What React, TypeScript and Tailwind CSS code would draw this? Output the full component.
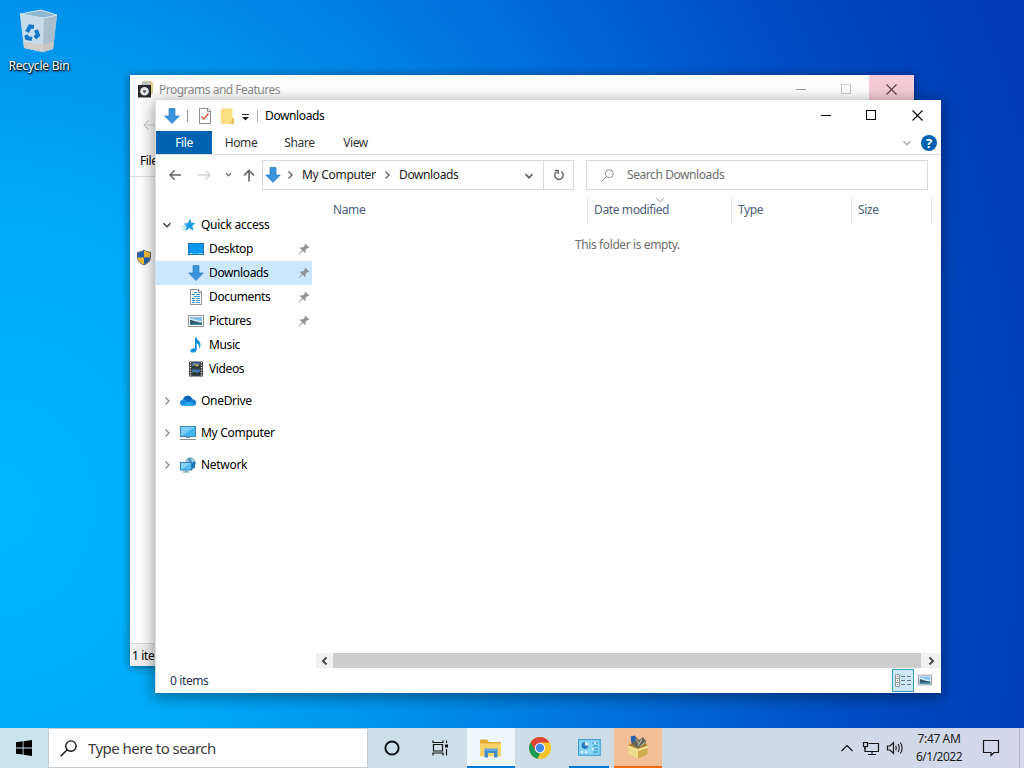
import type { ReactNode } from "react";

function DownArrow({ className = "" }: { className?: string }) {
  return (
    <svg width="16" height="16" viewBox="0 0 16 16" className={className}>
      <path d="M5 0.5H11V8H15.3L8 15.5L0.7 8H5Z" fill="#3a93dd" stroke="#2b78bb" strokeWidth="0.7" />
    </svg>
  );
}

function StarIcon() {
  return (
    <svg width="16" height="16" viewBox="0 0 16 16">
      <path d="M9.3 1.5L10.4 5.8L14.5 6L11.4 8.8L12.3 13.8L8.4 11L4.4 14L5.6 9.3L2.5 6.8L6.9 6Z" fill="#1b9de8" />
      <path d="M1.5 9.5H5.5M2 12H5M3 7.3H6" stroke="#6fc3f2" strokeWidth="0.9" />
    </svg>
  );
}

function DesktopIcon() {
  return (
    <svg width="16" height="16" viewBox="0 0 16 16">
      <rect x="0.5" y="2.5" width="15" height="11" fill="#0a97f0" stroke="#1478bd" />
      <path d="M1 12.5H15" stroke="#3db4fa" />
      <path d="M2 12.5H3.5M11.5 12.5H12.5M13.5 12.5H14.5" stroke="#e4f5ff" />
    </svg>
  );
}

function DocumentIcon() {
  return (
    <svg width="16" height="16" viewBox="0 0 16 16">
      <path d="M2.5 0.5H11L13.5 3V15.5H2.5Z" fill="#fafcfd" stroke="#8b949b" />
      <path d="M10.5 0.5V3.5H13.5" fill="none" stroke="#8b949b" />
      <path d="M6 3.5H9M4 5.5H7M8 5.5H12M6 7.5H12M4 9.5H7M8 9.5H12M4 11.5H7M8 11.5H12M4 13.5H7M8 13.5H12" stroke="#3997d6" />
    </svg>
  );
}

function PictureIcon({ size = 16 }: { size?: number }) {
  return (
    <svg width={size} height={size} viewBox="0 0 16 16">
      <rect x="0.5" y="2.5" width="15" height="11" fill="#fff" stroke="#8d959b" />
      <rect x="2" y="4" width="12" height="8" fill="#83c3ee" />
      <path d="M2 6C5 4.5 9 8.5 14 8V10H2Z" fill="#d4eaf3" />
      <path d="M2 7C5 7 8 9.5 14 9.5V12H2Z" fill="#31566a" />
      <path d="M2 10.5H14V12H2Z" fill="#3680a7" />
    </svg>
  );
}

function MusicIcon() {
  return (
    <svg width="16" height="16" viewBox="0 0 16 16">
      <path d="M7 0.5H8.7C9 3.5 13 4 12.5 8.5C12.3 10 11.8 10.7 11 11.5C11.6 8.5 10.7 7 8.7 6.3V12.5C8.7 14.5 7 15.6 4.8 15.6C3 15.6 2.3 14.6 2.5 13.5C2.8 11.8 5 10.8 7 11.4Z" fill="#128fdf" />
    </svg>
  );
}

function VideoIcon() {
  return (
    <svg width="16" height="16" viewBox="0 0 16 16">
      <rect x="1" y="0.5" width="14" height="15" fill="#35363b" />
      <path d="M2.5 1V16M13.5 1V16" stroke="#e8e8e8" strokeWidth="1.4" strokeDasharray="1.3 1.2" />
      <rect x="4" y="1.5" width="8" height="6" fill="#4968a6" />
      <rect x="4" y="8.5" width="8" height="6" fill="#3a6fb2" />
      <path d="M4 6L7 4L9 5L12 3V7.5H4ZM4 12.5L6 10.5L9 12L12 11V14.5H4Z" fill="#28372c" />
      <path d="M5 3L7 2.5L8 4L10 3L11 5L8 5.5ZM5 10L7 9.5L8 10.5Z" fill="#b5b45a" />
    </svg>
  );
}

function CloudIcon() {
  return (
    <svg width="16" height="16" viewBox="0 0 16 16">
      <path d="M3.5 13C1.4 13 0 11.7 0 9.8C0 8 1.4 6.8 3 6.5C4 3.5 6 2.7 7.8 2.7C10 2.7 11.5 4.2 12.1 6.2C14.5 6.2 16 7.8 16 9.7C16 11.8 14.6 13 12.6 13Z" fill="#1a8de0" />
      <path d="M3 6.5C4 3.5 6 2.7 7.8 2.7C10 2.7 11.5 4.2 12.1 6.2L8.5 8.6L5.5 6.7C4.7 6.2 3.8 6.2 3 6.5Z" fill="#0b62b3" />
      <path d="M1.2 12.2L12.1 6.2C14.5 6.2 16 7.8 16 9.7C16 10.5 15.7 11.3 15.2 11.9L9 8.7L1.2 12.2Z" fill="#167fd5" />
      <path d="M1.2 12.2L9 8.7L15.2 11.9C14.6 12.6 13.7 13 12.6 13H3.5C2.5 13 1.8 12.7 1.2 12.2Z" fill="#28a6ec" />
    </svg>
  );
}

function ComputerIcon() {
  return (
    <svg width="16" height="16" viewBox="0 0 16 16">
      <rect x="0.5" y="1.5" width="15" height="10" fill="#45b4f5" stroke="#4287b4" />
      <path d="M1 11V2H15Z" fill="#7ccefb" />
      <path d="M6 12H10V13H6Z" fill="#6b94ad" />
      <path d="M0 14.5H16" stroke="#86929a" />
    </svg>
  );
}

function NetworkIcon() {
  return (
    <svg width="16" height="16" viewBox="0 0 16 16">
      <circle cx="10.5" cy="5.5" r="5" fill="#5794b8" />
      <path d="M7 3C9 2 9 4.5 8 6L6 5ZM11 1C13 1 14.5 3 14.8 4.5L12 5Z" fill="#a9d2e5" />
      <path d="M11.5 6L15.5 4.5L15 10.5L12 12.5Z" fill="#1978b7" />
      <rect x="0.5" y="5.5" width="11" height="7.5" fill="#55bdf5" stroke="#2f83b9" />
      <path d="M1 12.5V6H11Z" fill="#88d4fb" />
      <path d="M3 15H9M6 13V15" stroke="#4d8bae" />
    </svg>
  );
}

function PinIcon() {
  return (
    <svg width="12" height="12" viewBox="0 0 12 12">
      <path d="M7.2 0.8L11.2 4.6L10.3 5.3L9.5 5.1L7.5 7.1L7.6 9.2L6.8 10L4.5 7.7L1.2 11.2L0.8 10.8L3.9 7.1L1.8 5L2.6 4.3L4.8 4.5L6.8 2.5L6.5 1.5Z" fill="#8d949b" />
    </svg>
  );
}

function Chevron({ d, color = "#555", width = 1.3 }: { d: "right" | "down" | "left" | "up"; color?: string; width?: number }) {
  const paths = {
    right: "M3.5 1.5L7 5L3.5 8.5",
    left: "M6.5 1.5L3 5L6.5 8.5",
    down: "M1.5 3.2L5 6.7L8.5 3.2",
    up: "M1.5 6.7L5 3.2L8.5 6.7",
  };
  return (
    <svg width="10" height="10" viewBox="0 0 10 10" className="shrink-0">
      <path d={paths[d]} fill="none" stroke={color} strokeWidth={width} />
    </svg>
  );
}

function SearchGlass({ size, color, width = 1 }: { size: number; color: string; width?: number }) {
  return (
    <svg width={size} height={size} viewBox="0 0 16 16" className="shrink-0">
      <circle cx="10.3" cy="5.7" r="4.9" fill="none" stroke={color} strokeWidth={width} />
      <path d="M6.8 9.2L0.6 15.4" stroke={color} strokeWidth={width} />
    </svg>
  );
}

function WindowButtons({ dim }: { dim?: boolean }) {
  return (
    <div className="flex h-full">
      <div className="flex w-[45px] items-center justify-center">
        <svg width="11" height="11"><path d="M0 5.5H10" stroke={dim ? "#999" : "#000"} /></svg>
      </div>
      <div className="flex w-[45px] items-center justify-center">
        <svg width="11" height="11">
          <rect x="0.5" y="0.5" width="9" height="9" fill="none" stroke={dim ? "#ccc" : "#000"} />
        </svg>
      </div>
      <div className={dim ? "flex w-[45px] items-center justify-center bg-[#f6cbd5]" : "flex w-[46px] items-center justify-center"}>
        <svg width="11" height="11"><path d="M0.5 0.5L10.5 10.5M10.5 0.5L0.5 10.5" stroke={dim ? "#5a3c42" : "#000"} strokeWidth="1.1" /></svg>
      </div>
    </div>
  );
}

const quickAccess = [
  { label: "Desktop", icon: <DesktopIcon />, pinned: true },
  { label: "Downloads", icon: <DownArrow />, pinned: true, selected: true },
  { label: "Documents", icon: <DocumentIcon />, pinned: true },
  { label: "Pictures", icon: <PictureIcon />, pinned: true },
  { label: "Music", icon: <MusicIcon /> },
  { label: "Videos", icon: <VideoIcon /> },
];

const roots = [
  { label: "OneDrive", icon: <CloudIcon /> },
  { label: "My Computer", icon: <ComputerIcon /> },
  { label: "Network", icon: <NetworkIcon /> },
];

const columns = [
  { label: "Name", className: "w-[276px] pl-[21px]" },
  { label: "Date modified", className: "w-[144px] pl-[6px]", sorted: true },
  { label: "Type", className: "w-[120px] pl-[6px]" },
  { label: "Size", className: "w-[80px] pl-[6px]" },
];

function NavPane() {
  return (
    <div className="w-[156px] shrink-0 pt-[18px] text-black">
      <div className="flex h-6 items-center pl-[6px] tracking-[-0.27px]">
        <Chevron d="down" color="#444" width={1.6} />
        <span className="ml-[9px] mr-1"><StarIcon /></span>
        Quick access
      </div>
      {quickAccess.map((item) => (
        <div
          key={item.label}
          className={`flex h-6 items-center pl-8 pr-[2px] ${item.selected ? "bg-[#cce8ff]" : ""}`}
        >
          {item.icon}
          <span className="ml-[5px] flex-1">{item.label}</span>
          {item.pinned && <PinIcon />}
        </div>
      ))}
      {roots.map((item) => (
        <div key={item.label} className="mt-2 flex h-6 items-center pl-[6px] tracking-[-0.3px]">
          <Chevron d="right" color="#999" width={1.6} />
          <span className="ml-2 mr-[5px]">{item.icon}</span>
          {item.label}
        </div>
      ))}
    </div>
  );
}

function AddressBar() {
  return (
    <div className="flex h-10 items-center text-[#1a1a1a]">
      <svg width="100" height="16" viewBox="0 0 100 16" fill="none" className="ml-[6px] shrink-0">
        <path d="M8 8H19M12.7 3.2L8 8L12.7 12.8" stroke="#666" strokeWidth="1.4" />
        <path d="M36 8H48M43.3 3.2L48 8L43.3 12.8" stroke="#d5d5d5" strokeWidth="1.4" />
        <path d="M64 6.2L66.5 8.8L69 6.2" stroke="#777" strokeWidth="1.4" />
        <path d="M87 14.5V3.5M82 8.5L87 3.5L92 8.5" stroke="#666" strokeWidth="1.6" />
      </svg>
      <div className="flex h-[30px] w-[312px] shrink-0 items-center border border-[#d9d9d9]">
        <DownArrow className="ml-[2px]" />
        <span className="ml-1 mr-[7px] flex"><Chevron d="right" color="#666" width={1.4} /></span>
        <span className="w-[75px] tracking-[-0.3px]">My Computer</span>
        <span className="ml-[5px] mr-[7px] flex"><Chevron d="right" color="#666" width={1.4} /></span>
        <span className="flex-1">Downloads</span>
        <span className="mr-[9px] mt-[2px]"><Chevron d="down" color="#666" width={1.8} /></span>
        <div className="flex h-full w-[30px] items-center justify-center border-l border-[#d9d9d9]">
          <svg width="12" height="12" viewBox="0 0 12 12" fill="none" stroke="#666" strokeWidth="1.5">
            <path d="M8.2 2.6A4.2 4.2 0 1 1 3.6 2.8" />
            <path d="M2 1.6H5.2V5" />
          </svg>
        </div>
      </div>
      <div className="ml-3 flex h-[30px] w-[342px] shrink-0 items-center border border-[#d9d9d9] pl-[14px] text-[#6d6d6d]">
        <SearchGlass size={13} color="#777" />
        <span className="ml-[13px] tracking-[-0.42px]">Search Downloads</span>
      </div>
    </div>
  );
}

function ExplorerWindow() {
  return (
    <div className="absolute left-[155px] top-[100px] flex h-[593px] w-[786px] flex-col border-l border-[#dde1e4] bg-white shadow-[0_3px_14px_2px_rgba(0,0,0,0.38)]">
      <div className="flex h-[31px] shrink-0 items-center">
        <DownArrow className="ml-2" />
        <span className="ml-[7px] h-3 w-px bg-[#999]" />
        <svg width="59" height="18" viewBox="0 0 59 18" className="ml-[10px]">
          <path d="M1.5 1.5H10L12.5 4V16.5H1.5Z" fill="#fff" stroke="#8e8e8e" />
          <path d="M9.5 1.5V4.5H12.5" fill="none" stroke="#8e8e8e" />
          <path d="M3.3 9.5L5.8 12L10.5 6.5" fill="none" stroke="#d6593c" strokeWidth="1.5" />
          <path d="M23 1.5H34.5V11H36V17H23Z" fill="#f9de82" />
          <path d="M34.5 11H36V17H33Z" fill="#e8bd4c" />
          <path d="M44 7.5H51" stroke="#222" />
          <path d="M44 10H51L47.5 13.5Z" fill="#222" />
        </svg>
        <span className="ml-0 h-3 w-px bg-[#aaa]" />
        <span className="ml-[7px] flex-1 text-black">Downloads</span>
        <WindowButtons />
        <span className="w-[1px]" />
      </div>
      <div className="flex h-6 shrink-0 items-center border-b border-[#dcdcdc] text-[#333]">
        <span className="flex h-full w-14 items-center justify-center bg-[#0063b1] text-white">File</span>
        <span className="w-[58px] text-center">Home</span>
        <span className="w-[59px] text-center">Share</span>
        <span className="w-[53px] text-center">View</span>
        <span className="flex-1" />
        <Chevron d="down" color="#999" width={1.1} />
        <span className="ml-[9px] mr-1 flex h-4 w-4 items-center justify-center rounded-full bg-[#0063b1] font-['Open_Sans',sans-serif] text-[13px] font-bold tracking-normal text-white">?</span>
      </div>
      <AddressBar />
      <div className="flex min-h-0 flex-1">
        <NavPane />
        <div className="flex flex-1 flex-col pl-1">
          <div className="-ml-1 flex h-[30px] text-[#4c607a]">
            {columns.map((col) => (
              <div key={col.label} className={`relative flex shrink-0 items-center border-r border-[#e8e8e8] ${col.className}`}>
                {col.label}
                {col.sorted && (
                  <span className="absolute left-[67px] top-0"><Chevron d="down" color="#888" width={0.9} /></span>
                )}
              </div>
            ))}
          </div>
          <div className="mt-[12px] flex-1 pr-[2px] text-center tracking-[-0.4px] text-[#6d6d6d]">This folder is empty.</div>
          <div className="flex h-[15px] items-center bg-[#f0f0f0]">
            <span className="flex w-[17px] justify-center"><Chevron d="left" color="#444" width={1.8} /></span>
            <span className="h-full w-[588px] bg-[#cdcdcd]" />
            <span className="flex flex-1 justify-center"><Chevron d="right" color="#444" width={1.8} /></span>
          </div>
        </div>
      </div>
      <div className="flex h-[25px] shrink-0 items-center pl-[14px] text-[#1f3350]">
        <span className="flex-1">0 items</span>
        <span className="mr-1 flex h-[23px] w-[22px] items-center justify-center border border-[#3b9cc4] bg-[#cce8f6]">
          <svg width="16" height="14" viewBox="0 0 16 14">
            <path d="M0.5 0.5H4.5V12.5H0.5ZM0.5 4.5H4.5M0.5 8.5H4.5" fill="#fff" stroke="#8799a3" />
            <path d="M2 2.5H3M2 6.5H3M2 10.5H3" stroke="#c05b5b" />
            <path d="M6 2.5H10M12 2.5H16M6 6.5H10M12 6.5H16M6 10.5H10M12 10.5H16" stroke="#6c7c86" />
          </svg>
        </span>
        <span className="-mt-[2px] mr-[9px]"><PictureIcon size={14} /></span>
      </div>
    </div>
  );
}

function ProgramsWindow() {
  return (
    <div className="absolute left-[130px] top-[75px] flex h-[591px] w-[784px] flex-col bg-white shadow-[0_1px_8px_1px_rgba(0,0,0,0.38)]">
      <div className="flex h-7 shrink-0 items-center pl-[7px] text-[#8c8c8c]">
        <svg width="17" height="18" viewBox="0 0 17 18">
          <path d="M4 4L6 1H14L16 3V13L13 16H4Z" fill="#d9c98c" />
          <path d="M5 2H13V5H5Z" fill="#b8c4ca" />
          <rect x="1" y="5" width="13" height="12.5" fill="#29292b" />
          <circle cx="7.5" cy="11.3" r="4.3" fill="#e2e5e6" />
          <circle cx="7.5" cy="11.3" r="1.4" fill="#555" />
        </svg>
        <span className="ml-[5px] flex-1 pt-px tracking-[-0.5px]">Programs and Features</span>
        <WindowButtons dim />
      </div>
      <div className="flex h-[43px] shrink-0 items-center pl-[13px]">
        <svg width="12" height="12" viewBox="0 0 12 12" fill="none" stroke="#ccc" strokeWidth="1.2">
          <path d="M1 6H12M5.5 1.5L1 6L5.5 10.5" />
        </svg>
      </div>
      <div className="flex h-[31px] shrink-0 items-center border-b border-[#ddd] pl-[10px] text-black">File</div>
      <div className="flex-1 pl-[6px] pt-[72px]">
        <svg width="16" height="17" viewBox="0 0 16 17">
          <path d="M8 1C10 2.6 12.3 3.2 14.5 3.2V8C14.5 12 11.5 14.7 8 16C4.5 14.7 1.5 12 1.5 8V3.2C3.7 3.2 6 2.6 8 1Z" fill="#f3bd35" stroke="#56646e" />
          <path d="M8 1.6C10 3 12 3.7 14 3.7V8.5H8ZM8 8.5H2C2.3 12 4.8 14.2 8 15.4Z" fill="#f3bd35" />
          <path d="M8 1.6C6 3 4 3.7 2 3.7V8.5H8ZM8 8.5H14C13.7 12 11.2 14.2 8 15.4Z" fill="#1e62b4" />
        </svg>
      </div>
      <div className="flex h-[23px] shrink-0 items-center border-t border-[#d8d8d8] bg-[#f0f0f0] pl-[2px] pt-[2px] text-black">1 item</div>
    </div>
  );
}

function TaskButton({ className = "", children }: { className?: string; children: ReactNode }) {
  return <div className={`flex h-full shrink-0 items-center justify-center ${className}`}>{children}</div>;
}

function Taskbar() {
  return (
    <div className="flex h-10 shrink-0 bg-[linear-gradient(90deg,#c9e3ed_0%,#cde0e9_35%,#cddbe6_65%,#d2d8ea_100%)] text-[#1c1c1c]">
      <TaskButton className="w-12">
        <svg width="16" height="16" viewBox="0 0 16 16">
          <path d="M0 2.3L6.7 1.3V7.5H0ZM7.5 1.2L16 0V7.5H7.5ZM0 8.4H6.7V14.6L0 13.7ZM7.5 8.4H16V16L7.5 14.7Z" fill="#000" />
        </svg>
      </TaskButton>
      <div className="flex w-[320px] shrink-0 items-center border border-[#c3ccd0] bg-white pl-[11px] text-[#3c3c3c]">
        <SearchGlass size={17} color="#111" width={1.3} />
        <span className="ml-[11px] text-[15px] tracking-[-0.55px]">Type here to search</span>
      </div>
      <TaskButton className="w-12">
        <svg width="16" height="16"><circle cx="8" cy="8" r="6.6" fill="none" stroke="#0e1218" strokeWidth="2" /></svg>
      </TaskButton>
      <TaskButton className="w-12">
        <svg width="17" height="16" viewBox="0 0 17 16" fill="none" stroke="#111" strokeWidth="1.2">
          <path d="M1 0.5V2.5H11V0.5M1 15.5V13H11V15.5M1.5 4.5H10.5V11H1.5ZM14.5 0.5V3M14.5 9V15.5" />
          <path d="M13 4.5H16V7.5H13Z" fill="#111" stroke="none" />
        </svg>
      </TaskButton>
      <TaskButton className="ml-[3px] w-12 border-b-2 border-[#0078d4] bg-[#eef7fc]">
        <svg width="22" height="19" viewBox="0 0 22 19" className="mt-[2px]">
          <path d="M0 1.5Q0 0.5 1 0.5H7L9 3H20Q21 3 21 4V17H0Z" fill="#e5ad37" />
          <path d="M0 4.5H21V17.5H0Z" fill="#fbd366" />
          <path d="M4.5 10.5H17.5V18.5H14V14H8V18.5H4.5Z" fill="#438fcb" />
          <path d="M4.5 9.5H17.5V12H4.5Z" fill="#5ba7dd" />
        </svg>
      </TaskButton>
      <TaskButton className="w-[50px]">
        <svg width="22" height="22" viewBox="0 0 22 22">
          <circle cx="11" cy="11" r="11" fill="#f6c62b" />
          <path d="M1.5 5.5A11 11 0 0 1 20.5 5.5H11L6.2 13.8Z" fill="#db4437" />
          <path d="M1.5 5.5L6.5 13.8L11 16L8.7 21.7A11 11 0 0 1 1.5 5.5Z" fill="#1e9957" />
          <circle cx="11" cy="11" r="5.2" fill="#f5f5f5" />
          <circle cx="11" cy="11" r="4.2" fill="#4587e8" />
        </svg>
      </TaskButton>
      <TaskButton className="ml-[4px] w-10 border-b-2 border-[#0078d4]">
        <svg width="23" height="18" viewBox="0 0 23 18" className="mt-[2px]">
          <rect x="0.6" y="0.6" width="21.6" height="15.6" fill="#8ad6f7" stroke="#3d9bcc" strokeWidth="1.1" />
          <circle cx="7" cy="6.5" r="3.4" fill="#2878ba" />
          <path d="M7 6.5V3A3.5 3.5 0 0 1 10.5 6.5Z" fill="#fff" />
          <path d="M14 4H20M15 7H20M14 10H20M15 13H20" stroke="#2b86c0" strokeWidth="1" />
          <path d="M3 13H5M7 13H9M17 3V5M15 9V11" stroke="#fff" strokeWidth="1.5" />
        </svg>
      </TaskButton>
      <TaskButton className="ml-[5px] w-12 border-b-2 border-[#f2690d] bg-[#f3bf97]">
        <svg width="22" height="25" viewBox="0 0 22 25">
          <path d="M4 3L8 1L12 5L16 2L19 6L18 13H5Z" fill="#62655a" />
          <path d="M3.5 1.5L8 0.5L9 5.5L4.5 7.5Z" fill="#2565ae" />
          <path d="M9 4L12 9M15 4L11 11M18 7L13 12" stroke="#b6b29a" strokeWidth="1.2" />
          <path d="M1 10.5L4 8.5L11 13L18 8.5L21 10.5L11 15Z" fill="#a97e2e" />
          <path d="M1.5 11.5L11 15V24L1.5 19Z" fill="#efd98a" />
          <path d="M20.5 11.5L11 15V24L20.5 19Z" fill="#d2ac50" />
          <path d="M0.5 12.5L11 16L21.5 12.5L20.5 10.5L11 14L1.5 10.5Z" fill="#f5e29d" />
        </svg>
      </TaskButton>
      <div className="flex flex-1 items-center justify-end">
        <svg width="66" height="18" viewBox="0 0 66 18" fill="none" stroke="#151515" strokeWidth="1.2">
          <path d="M1.5 12L7 6.5L12.5 12" />
          <path d="M28.5 4.5H38.5V12.5H25V8M32 13V15.5M28 15.5H36" />
          <path d="M23.5 3.5H27.5V7.5H23.5ZM25 7.5V10.5" />
          <path d="M47.5 7H50L53.5 3.7V14.3L50 11H47.5Z" />
          <path d="M55.7 6.7Q57 9 55.7 11.3M58 5Q60.5 9 58 13M60.3 3.5Q64 9 60.3 14.5" strokeWidth="1.1" />
        </svg>
        <div className="ml-[2px] w-[62px] text-center leading-[18px]">
          <div>7:47 AM</div>
          <div className="tracking-[-0.5px]">6/1/2022</div>
        </div>
        <svg width="18" height="18" viewBox="0 0 18 18" fill="none" stroke="#151515" strokeWidth="1.2" className="ml-[12px]">
          <path d="M1.5 1.5H16.5V13.5H12L9 16.5V13.5H1.5Z" />
        </svg>
        <span className="ml-[19px] mr-1 h-full w-px bg-[#b1b9ca]" />
      </div>
    </div>
  );
}

export default function App() {
  return (
    <div className="relative flex h-[768px] w-[1024px] flex-col overflow-hidden bg-[radial-gradient(ellipse_1090px_1250px_at_0%_66%,#00b7ff_0%,#00acf9_22%,#0092ec_40%,#006edb_60%,#004cc4_80%,#003ab4_100%)] font-['Noto_Sans',sans-serif] text-[12px] leading-4 tracking-[-0.38px]">
      <div className="flex-1">
        <div className="flex w-[78px] flex-col items-center pt-[8px]">
          <svg width="40" height="46" viewBox="0 0 40 46">
            <path d="M1 6L22 2L38 7L34 41L24 44L5 40Z" fill="#b8d3e2" />
            <path d="M1 6L25 10L24 44L5 40Z" fill="#c6dce8" />
            <path d="M25 10L38 7L34 41L24 44Z" fill="#a9bfcd" />
            <path d="M5 34L24 37L35 33L34 41L24 44L5 40Z" fill="#d5c9c1" opacity="0.7" />
            <path d="M1 6L22 2L38 7L25 10Z" fill="#8db7d0" stroke="#d5e8f1" strokeWidth="0.9" />
            <g fill="none" stroke="#1477ca" strokeWidth="4">
              <path d="M8 24L11 18.5L15 19" />
              <path d="M17 22L19 27L16 30" />
              <path d="M13 31L8 30L7 27" />
            </g>
          </svg>
          <span className="mt-[4px] tracking-[-0.2px] text-white [text-shadow:1px_1px_2px_#000,0_1px_2px_#000]">Recycle Bin</span>
        </div>
      </div>
      <Taskbar />
      <ProgramsWindow />
      <ExplorerWindow />
    </div>
  );
}
